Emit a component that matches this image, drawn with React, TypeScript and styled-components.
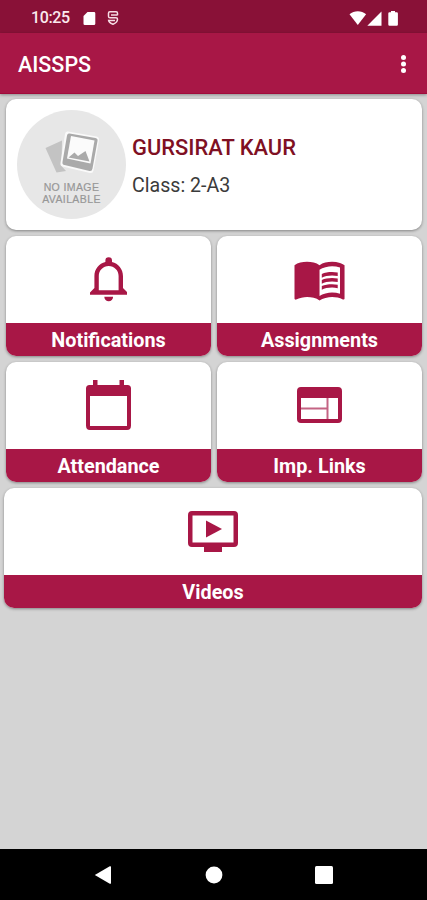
import React from "react";
import styled, { createGlobalStyle } from "styled-components";

const crimson = "#a81746";

const GlobalStyle = createGlobalStyle`
  * { box-sizing: border-box; }
  body { margin: 0; background: #d4d4d4; font-family: Roboto, "Liberation Sans", sans-serif; }
`;

const Screen = styled.div`
  width: 427px;
  height: 900px;
  display: flex;
  flex-direction: column;
  background: #d4d4d4;
  overflow: hidden;
`;

const StatusBar = styled.header`
  height: 33px;
  flex: none;
  display: flex;
  align-items: center;
  justify-content: space-between;
  padding: 3px 28px 0 31px;
  background: #891137;
  color: #fbe9ee;
`;

const StatusGroup = styled.div`
  display: flex;
  align-items: center;
`;

const Clock = styled.span`
  width: 52px;
  font-size: 16px;
  font-weight: 500;
  line-height: 18px;
  letter-spacing: -0.35px;
`;

const AppBar = styled.div`
  height: 61px;
  flex: none;
  display: flex;
  align-items: center;
  justify-content: space-between;
  padding: 4px 19px 0 18px;
  background: ${crimson};
  border-bottom: 1px solid #a00c3b;
  box-shadow: 0 1px 3px rgba(0, 0, 0, 0.35);
`;

const Title = styled.h1`
  margin: 0;
  color: #fff;
  font-size: 21.5px;
  font-weight: 500;
  line-height: 26px;
`;

const MenuButton = styled.button`
  display: flex;
  padding: 0 0 3px;
  border: 0;
  background: none;
`;

const Content = styled.main`
  flex: 1;
  display: flex;
  flex-direction: column;
  gap: 6px;
  padding: 5px 5px 0 4px;
`;

const cardShadow = "0 1px 3px rgba(0, 0, 0, 0.38)";

const ProfileCard = styled.section`
  height: 130.5px;
  margin-left: 2px;
  display: flex;
  align-items: center;
  gap: 6px;
  padding-left: 11px;
  background: #fff;
  border-radius: 10px;
  box-shadow: ${cardShadow};
`;

const Avatar = styled.div`
  width: 109px;
  height: 109px;
  flex: none;
  display: flex;
  flex-direction: column;
  align-items: center;
  padding-top: 21px;
  border-radius: 50%;
  background: #e7e7e7;
`;

const AvatarText = styled.span`
  margin-top: 7.500px;
  color: #979797;
  font-family: "Liberation Sans", sans-serif;
  font-size: 10.5px;
  line-height: 12px;
  text-align: center;
  letter-spacing: 0.4px;
  white-space: pre;
  -webkit-text-stroke: 0.2px #979797;
`;

const Details = styled.div`
  display: flex;
  flex-direction: column;
  gap: 14px;
  padding-top: 4px;
`;

const StudentName = styled.h2`
  margin: 0;
  color: #7f1023;
  font-size: 21.9px;
  font-weight: 500;
  line-height: 25px;
`;

const ClassName = styled.p`
  margin: 0;
  color: #3b3b3b;
  font-size: 19.6px;
  line-height: 24px;
`;

const TileGrid = styled.nav`
  display: grid;
  grid-template-columns: 205px 205px;
  justify-content: end;
  gap: 6px;
`;

const TileCard = styled.a<{ $wide?: boolean }>`
  height: 120px;
  ${(p) => p.$wide && "grid-column: 1 / -1; margin-left: -2px;"}
  display: flex;
  flex-direction: column;
  overflow: hidden;
  background: #fff;
  border-radius: 10px;
  box-shadow: ${cardShadow};
`;

const TileIcon = styled.div`
  flex: 1;
  display: flex;
  align-items: center;
  justify-content: center;
`;

const TileLabel = styled.div`
  height: 32.5px;
  background: ${crimson};
  color: #fff;
  font-size: 19.8px;
  font-weight: 700;
  line-height: 35px;
  text-align: center;
`;

const NavBar = styled.footer`
  height: 51px;
  flex: none;
  display: flex;
  align-items: center;
  justify-content: space-between;
  padding: 0 94px;
  background: #000;
`;

const SdCardIcon = () => (
  <svg width="13" height="15" viewBox="0 0 13 15" fill="#fff">
    <path d="M4.500 1H11a1.300 1.300 0 0 1 1.300 1.300v10.500A1.300 1.300 0 0 1 11 14H1.800A1.300 1.300 0 0 1 .5 12.700V5z" />
  </svg>
);

const ShieldIcon = () => (
  <svg width="12" height="16" viewBox="0 0 12 16" fill="none" stroke="#f6dce4" strokeWidth="1.500">
    <path d="M10.500 5.300V3.200Q10.500 1.800 9.100 1.800H2.900Q1.500 1.800 1.500 3.200V6.200Q1.500 7.800 3 7.800H9Q10.500 7.800 10.500 9.300C10.500 11.500 8.600 13.300 6 14.200C3.400 13.300 1.500 11.800 1.500 9.800" />
    <path d="M4 4.900H10.500M1.500 10.600H8" />
  </svg>
);

const SignalIcons = () => (
  <svg width="50" height="17" viewBox="349 9 50 17" fill="#fff">
    <path d="M349.500 13.300c4.600-4.200 12-4.200 16.600 0L357.800 24z" />
    <path d="M367.300 24.800 381.500 10.500V24.800z" />
    <path d="M391 10h4v1.200h1.700a1.200 1.200 0 0 1 1.200 1.200v11.200a1.200 1.200 0 0 1-1.200 1.200h-7.200a1.200 1.200 0 0 1-1.200-1.200V12.400a1.200 1.200 0 0 1 1.200-1.200H391z" />
  </svg>
);

const MoreIcon = () => (
  <svg width="9" height="20" viewBox="0 0 9 20" fill="#fff">
    <circle cx="4.500" cy="3.500" r="2.500" />
    <circle cx="4.500" cy="10" r="2.500" />
    <circle cx="4.500" cy="16.500" r="2.500" />
  </svg>
);

const PhotosIcon = () => (
  <svg width="56" height="43" viewBox="43 131 56 43">
    <path d="M44.500 148 61 140.500 60.500 166 65 171 55.500 172.500z" fill="#c3c3c3" />
    <path d="M67 131.500 95.500 136.500Q98.500 137 98 140L92.500 170.500Q92 173.500 89 173L61.500 166.500Q59 165.500 59.500 163L64 134Q64.500 131 67 131.500Z" fill="#fafafa" />
    <path d="M68.500 133.500 94.500 138Q97 138.500 96.500 141L91.500 168.500Q91 171.500 88.500 171L63.500 165Q61 164.500 61.500 162L66 135.500Q66.500 133 68.500 133.500Z" fill="#aaa" />
    <path d="M70 136 93.500 140.500 89.500 163.500 66 158.500z" fill="#fbfbfb" />
    <path d="M67.500 157.500 73.500 152.500 77 156 84.500 151 88.500 161.500z" fill="#aaa" />
  </svg>
);

const BellIcon = () => (
  <svg width="37.400" height="44.500" viewBox="3 2 17 20" fill={crimson}>
    <path d="M16 17H7v-6.500C7 8 9 6 11.500 6S16 8 16 10.500zM18 16v-5.500c0-3.070-2.140-5.640-5-6.320V3.500a1.500 1.500 0 0 0-3 0v.68c-2.870.68-5 3.250-5 6.320V16l-2 2v1h17v-1zM11.500 22a2 2 0 0 0 2-2h-4a2 2 0 0 0 2 2z" fillRule="evenodd" />
  </svg>
);

const BookIcon = () => (
  <svg width="54.600" height="54.600" viewBox="-.1 .2 24 24" fill={crimson}>
    <path d="M21 5c-1.110-.35-2.330-.5-3.500-.5-1.950 0-4.050.4-5.500 1.500-1.450-1.100-3.550-1.500-5.500-1.500S2.450 4.900 1 6v14.650c0 .25.25.5.5.5.1 0 .15-.05.25-.05C3.100 20.450 5.050 20 6.500 20c1.950 0 4.050.4 5.500 1.500 1.350-.85 3.800-1.500 5.500-1.500 1.650 0 3.350.3 4.750 1.050.1.05.15.05.25.05.25 0 .5-.25.5-.5V6c-.6-.45-1.250-.75-2-1zm0 13.500c-1.100-.35-2.300-.5-3.500-.5-1.700 0-4.150.65-5.500 1.500V8c1.350-.85 3.800-1.500 5.500-1.500 1.200 0 2.400.15 3.500.5z" />
    <path d="M17.500 10.500c.88 0 1.730.09 2.500.26V9.240c-.79-.15-1.640-.24-2.500-.24-1.700 0-3.240.29-4.500.83v1.660c1.130-.64 2.700-.99 4.500-.99zM13 12.490v1.660c1.130-.64 2.700-.99 4.500-.99.88 0 1.730.09 2.500.26V11.900c-.79-.15-1.640-.24-2.500-.24-1.700 0-3.240.3-4.500.83zM17.500 14.330c-1.700 0-3.240.29-4.500.83v1.660c1.130-.64 2.700-.99 4.500-.99.88 0 1.730.09 2.500.26v-1.520c-.79-.16-1.640-.24-2.500-.24z" />
  </svg>
);

const CalendarIcon = () => (
  <svg width="45" height="50" viewBox="0 0 45 50" fill={crimson}>
    <path d="M7 0h4.500v5h22V0H38v5h3.500Q45 5 45 8.500v37q0 4.500-4 4.500H4q-4 0-4-4.500v-37Q0 5 3.500 5H7zM4 16v30h37V16z" fillRule="evenodd" />
  </svg>
);

const LayoutIcon = () => (
  <svg width="45" height="36" viewBox="0 0 45 36" fill={crimson}>
    <path d="M4 0h37q4 0 4 4v28q0 4-4 4H4q-4 0-4-4V4Q0 0 4 0zM4 11v21h37V11z" fillRule="evenodd" />
    <path d="M29.500 11h2v21h-2zM4 20.500h26v2H4z" fill="#c46484" />
  </svg>
);

const VideoIcon = () => (
  <svg width="50" height="41" viewBox="0 0 50 41" fill={crimson}>
    <path d="M4 0h42q4 0 4 4v28q0 4-4 4H34v5H16v-5H4q-4 0-4-4V4Q0 0 4 0zM4.500 4.500v27h41v-27z" fillRule="evenodd" />
    <path d="M18 9.500 34 18 18 26.500z" />
  </svg>
);

const BackIcon = () => (
  <svg width="18" height="20" viewBox="0 0 18 20" fill="#fff">
    <path d="M.8 10 15.800 1.300Q17 .8 17 2V18q0 1.200-1.200.7z" />
  </svg>
);

const HomeIcon = () => (
  <svg width="18" height="18" viewBox="0 0 18 18" fill="#fff">
    <circle cx="9" cy="9" r="8.400" />
  </svg>
);

const RecentsIcon = () => (
  <svg width="18" height="18" viewBox="0 0 18 18" fill="#fff">
    <rect width="18" height="18" rx="1.500" />
  </svg>
);

interface TileProps {
  label: string;
  icon: React.ReactNode;
  wide?: boolean;
}

const Tile = ({ label, icon, wide }: TileProps) => (
  <TileCard $wide={wide}>
    <TileIcon>{icon}</TileIcon>
    <TileLabel>{label}</TileLabel>
  </TileCard>
);

const StatusIcons = styled(StatusGroup)`
  gap: 11px;
`;

export default function App() {
  return (
    <Screen>
      <GlobalStyle />
      <StatusBar>
        <StatusGroup>
          <Clock>10:25</Clock>
          <StatusIcons>
            <SdCardIcon />
            <ShieldIcon />
          </StatusIcons>
        </StatusGroup>
        <SignalIcons />
      </StatusBar>
      <AppBar>
        <Title>AISSPS</Title>
        <MenuButton aria-label="More options">
          <MoreIcon />
        </MenuButton>
      </AppBar>
      <Content>
        <ProfileCard>
          <Avatar>
            <PhotosIcon />
            <AvatarText>{"NO IMAGE\nAVAILABLE"}</AvatarText>
          </Avatar>
          <Details>
            <StudentName>GURSIRAT KAUR</StudentName>
            <ClassName>Class: 2-A3</ClassName>
          </Details>
        </ProfileCard>
        <TileGrid>
          <Tile label="Notifications" icon={<BellIcon />} />
          <Tile label="Assignments" icon={<BookIcon />} />
          <Tile label="Attendance" icon={<CalendarIcon />} />
          <Tile label="Imp. Links" icon={<LayoutIcon />} />
          <Tile label="Videos" icon={<VideoIcon />} wide />
        </TileGrid>
      </Content>
      <NavBar>
        <BackIcon />
        <HomeIcon />
        <RecentsIcon />
      </NavBar>
    </Screen>
  );
}
